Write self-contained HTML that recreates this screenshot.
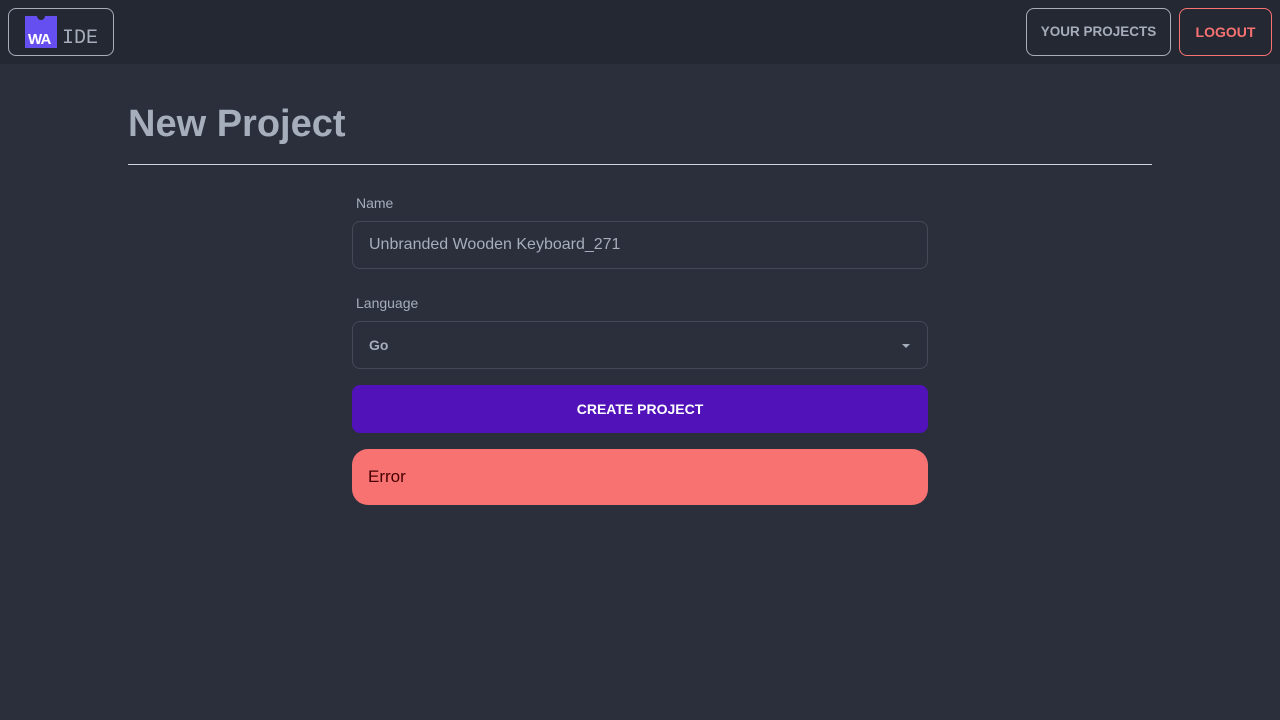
<!DOCTYPE html>
<html><head><style>
*{box-sizing:border-box;margin:0;padding:0}
body{width:1280px;height:720px;background:#2a2f3b;font-family:"Liberation Sans",sans-serif;color:#a6adbb;position:relative;overflow:hidden}
.nav{position:absolute;left:0;top:0;width:1280px;height:64px;background:#242832}
.logo{position:absolute;left:8px;top:8px;width:106px;height:48px;border:1px solid #a6adbb;border-radius:8px}
.wa{position:absolute;left:16px;top:7px;width:32px;height:32px;background:#654ff0}
.wa:before{content:"";position:absolute;left:12px;top:-4px;width:8px;height:8px;border-radius:50%;background:#242832}
.wa span{position:absolute;left:3px;bottom:0px;color:#fff;font-weight:bold;font-size:15px;letter-spacing:-0.8px}
.ide{position:absolute;left:53px;top:18px;font-family:"Liberation Mono",monospace;font-size:20px;color:#a6adbb}
.btn{position:absolute;top:8px;height:48px;border:1px solid #a6adbb;border-radius:8px;font-weight:bold;font-size:14px;line-height:46px;text-align:center}
h1{position:absolute;left:128px;top:103px;font-size:38px;font-weight:bold;color:#a6adbb}
.hr{position:absolute;left:128px;top:164px;width:1024px;height:1px;background:#d0d4dc}
.lbl{position:absolute;left:356px;font-size:14px}
.inp{position:absolute;left:352px;width:576px;height:48px;border:1px solid #434957;border-radius:8px;padding-left:16px;line-height:46px;font-size:16px}
</style></head><body>
<div class="nav">
<div class="logo"><div class="wa"><span>WA</span></div><div class="ide">IDE</div></div>
<div class="btn" style="left:1026px;width:145px;font-size:13.5px">YOUR PROJECTS</div>
<div class="btn" style="left:1179px;width:93px;border-color:#f87272;color:#f87272">LOGOUT</div>
</div>
<h1>New Project</h1>
<div class="hr"></div>
<div class="lbl" style="top:195px">Name</div>
<div class="inp" style="top:221px">Unbranded Wooden Keyboard_271</div>
<div class="lbl" style="top:295px">Language</div>
<div class="inp" style="top:321px;font-weight:bold;font-size:14px">Go<span style="position:absolute;right:17px;top:22px;border-left:4px solid transparent;border-right:4px solid transparent;border-top:4px solid #a6adbb"></span></div>
<div style="position:absolute;left:352px;top:385px;width:576px;height:48px;background:#5113b9;border-radius:8px;color:#fff;font-weight:bold;font-size:14px;text-align:center;line-height:48px">CREATE PROJECT</div>
<div style="position:absolute;left:352px;top:449px;width:576px;height:56px;background:#f87272;border-radius:16px;color:#470000;font-size:17px;line-height:56px;padding-left:16px">Error</div>
</body></html>
